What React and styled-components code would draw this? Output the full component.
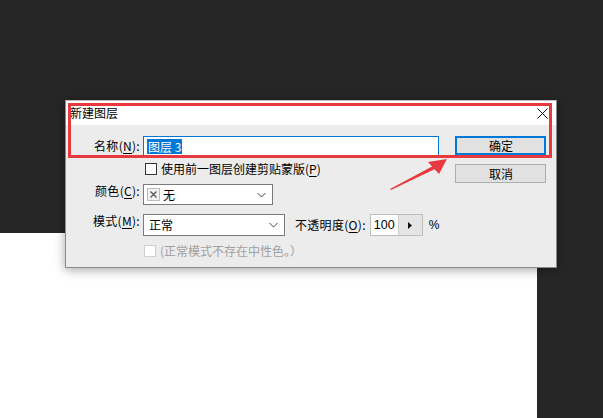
import React from "react";
import styled, { createGlobalStyle } from "styled-components";

const Global = createGlobalStyle`
  html, body { margin: 0; padding: 0; background: #262626; }
  body { font-family: "Noto Sans CJK SC", "Microsoft YaHei", sans-serif; }
`;

const Page = styled.div`
  position: relative;
  width: 603px;
  height: 418px;
  background: #262626;
  overflow: hidden;
`;

const Canvas = styled.div`
  margin-top: 233px;
  width: 537px;
  height: 185px;
  background: #ffffff;
`;

const Dialog = styled.div`
  position: absolute;
  left: 65px;
  top: 100px;
  width: 492px;
  height: 168px;
  background: #ececec;
  box-shadow: 0 2px 10px rgba(0, 0, 0, 0.35);
  border: 1px solid #8a8a8a;
  border-top-color: #bcbcbc;
  box-sizing: border-box;
  display: flex;
  flex-direction: column;
  font-size: 12px;
  color: #000;
`;

const TitleBar = styled.div`
  height: 24px;
  background: #fff;
  display: flex;
  align-items: center;
  justify-content: space-between;
  padding: 0 8px 0 4px;
  font-size: 12px;
  line-height: 1;
`;

const Close = styled.svg`
  width: 11px;
  height: 11px;
`;

const Body = styled.div`
  display: flex;
  padding-top: 11px;
`;

const Form = styled.div`
  display: grid;
  grid-template-columns: 74px auto;
  column-gap: 3px;
  grid-auto-rows: auto;
  align-items: center;
`;

const Label = styled.label`
  justify-self: end;
  white-space: nowrap;
  line-height: 1;
  letter-spacing: 0.3px;
  u { text-decoration: underline; text-underline-offset: 2px; }
`;

const Field = styled.div`
  display: flex;
  align-items: center;
  margin-top: ${(p) => p.$mt || 0}px;
  height: ${(p) => p.$h || 20}px;
  u { text-decoration: underline; text-underline-offset: 2px; }
`;

const TextInput = styled.div`
  width: 296px;
  height: 20px;
  box-sizing: border-box;
  background: #fff;
  border: 1px solid #0078d7;
  display: flex;
  align-items: center;
  padding-left: 3px;
`;

const Selected = styled.span`
  background: #0078d7;
  color: #fff;
  line-height: 15px;
  height: 15px;
  padding: 0 1px;
  font-size: 12px;
`;

const Check = styled.span`
  width: 12px;
  height: 12px;
  box-sizing: border-box;
  border: 1px solid ${(p) => (p.$disabled ? "#cfcfcf" : "#333")};
  background: #fff;
  margin-left: ${(p) => p.$ml || 2}px;
  margin-right: 4px;
  flex: none;
`;

const CheckText = styled.span`
  color: ${(p) => (p.$disabled ? "#a0a0a0" : "#000")};
  white-space: nowrap;
  line-height: 1;
`;

const Select = styled.div`
  width: ${(p) => p.$w}px;
  height: ${(p) => p.$h}px;
  box-sizing: border-box;
  background: #fff;
  border: 1px solid #7a7a7a;
  display: flex;
  align-items: center;
  padding: 0 6px 0 ${(p) => p.$pl}px;
  line-height: 1;
`;

const SelectText = styled.span`
  flex: 1;
`;

const Swatch = styled.span`
  width: 13px;
  height: 13px;
  box-sizing: border-box;
  border: 1px solid #bdbdbd;
  background: #f2f2f2;
  display: flex;
  align-items: center;
  justify-content: center;
  margin-right: 3px;
`;

const Chevron = styled.svg`
  width: 9px;
  height: 6px;
`;

const OpacityLabel = styled.span`
  margin-left: 10px;
  margin-right: 4px;
  white-space: nowrap;
  line-height: 1;
  letter-spacing: 0.3px;
`;

const Spin = styled.div`
  display: flex;
  height: 22px;
  border: 1px solid #bdbdbd;
  box-sizing: border-box;
`;

const SpinValue = styled.span`
  width: 27px;
  background: #fff;
  display: flex;
  align-items: center;
  padding-left: 3px;
  box-sizing: border-box;
  font-family: "Liberation Sans", Arial, sans-serif;
  font-size: 12.5px;
`;

const SpinArrow = styled.span`
  width: 23px;
  background: #e4e4e4;
  border-left: 1px solid #cfcfcf;
  display: flex;
  align-items: center;
  justify-content: center;
`;

const Percent = styled.span`
  margin-left: 6px;
  font-family: "Liberation Sans", Arial, sans-serif;
`;

const Buttons = styled.div`
  margin-left: 16px;
  display: flex;
  flex-direction: column;
  gap: 9px;
`;

const Button = styled.div`
  width: 91px;
  height: 19px;
  box-sizing: border-box;
  background: #e1e1e1;
  border: ${(p) => (p.$primary ? "2px solid #0078d7" : "1px solid #adadad")};
  display: flex;
  align-items: center;
  justify-content: center;
  line-height: 1;
`;

const Annotation = styled.div`
  position: absolute;
  left: 68px;
  top: 103px;
  width: 484px;
  height: 55px;
  box-sizing: border-box;
  border: 3px solid #e8393e;
  pointer-events: none;
`;

const Arrow = styled.svg`
  position: absolute;
  left: 385px;
  top: 155px;
  width: 70px;
  height: 40px;
`;

export default function App() {
  return (
    <>
      <Global />
      <Page>
        <Canvas />
        <Dialog>
          <TitleBar>
            <span>新建图层</span>
            <Close viewBox="0 0 11 11">
              <path d="M0.5 0.5 L10.5 10.5 M10.5 0.5 L0.5 10.5" stroke="#111" strokeWidth="1" fill="none" />
            </Close>
          </TitleBar>
          <Body>
            <Form>
              <Label>名称(<u>N</u>):</Label>
              <Field $h={20}>
                <TextInput>
                  <Selected>图层 3</Selected>
                </TextInput>
              </Field>

              <span />
              <Field $mt={6} $h={14}>
                <Check />
                <CheckText>使用前一图层创建剪贴蒙版(<u>P</u>)</CheckText>
              </Field>

              <Label>颜色(<u>C</u>):</Label>
              <Field $mt={8} $h={21}>
                <Select $w={130} $h={21} $pl={3}>
                  <Swatch>
                    <svg width="7" height="7" viewBox="0 0 7 7">
                      <path d="M0.5 0.5 L6.5 6.5 M6.5 0.5 L0.5 6.5" stroke="#555" strokeWidth="1.2" />
                    </svg>
                  </Swatch>
                  <SelectText>无</SelectText>
                  <Chevron viewBox="0 0 9 6">
                    <path d="M0.5 1 L4.5 5 L8.5 1" stroke="#444" fill="none" />
                  </Chevron>
                </Select>
              </Field>

              <Label>模式(<u>M</u>):</Label>
              <Field $mt={9} $h={22}>
                <Select $w={142} $h={22} $pl={5}>
                  <SelectText>正常</SelectText>
                  <Chevron viewBox="0 0 9 6">
                    <path d="M0.5 1 L4.5 5 L8.5 1" stroke="#444" fill="none" />
                  </Chevron>
                </Select>
                <OpacityLabel>不透明度(<u>O</u>):</OpacityLabel>
                <Spin>
                  <SpinValue>100</SpinValue>
                  <SpinArrow>
                    <svg width="4" height="7" viewBox="0 0 4 7">
                      <path d="M0 0 L4 3.5 L0 7 Z" fill="#111" />
                    </svg>
                  </SpinArrow>
                </Spin>
                <Percent>%</Percent>
              </Field>

              <span />
              <Field $mt={8} $h={14}>
                <Check $disabled $ml={1} />
                <CheckText $disabled>(正常模式不存在中性色。）</CheckText>
              </Field>
            </Form>
            <Buttons>
              <Button $primary>确定</Button>
              <Button>取消</Button>
            </Buttons>
          </Body>
        </Dialog>
        <Annotation />
        <Arrow viewBox="0 0 70 40">
          <path d="M5 34 L48 11 L50 14 L6 35 Z" fill="#e8393e" />
          <path d="M62 4 L43 7 L54 19 Z" fill="#e8393e" />
        </Arrow>
      </Page>
    </>
  );
}
